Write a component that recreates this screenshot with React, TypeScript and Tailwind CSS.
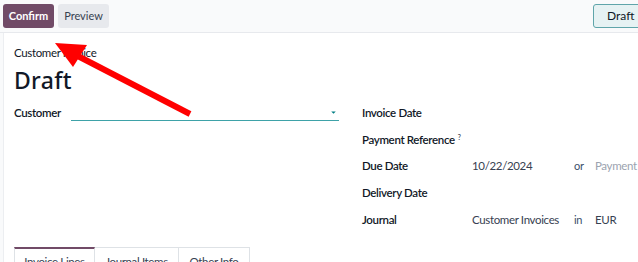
import { ChevronDown } from 'lucide-react';

const rightRows = [
  { label: 'Invoice Date' },
  { label: 'Payment Reference', help: true },
  { label: 'Due Date', value: '10/22/2024', sep: 'or', extra: 'Payment Terms', extraMuted: true },
  { label: 'Delivery Date' },
  { label: 'Journal', value: 'Customer Invoices', sep: 'in', extra: 'EUR' },
];

export default function App() {
  return (
    <div className="relative w-[638px] h-[262px] overflow-hidden bg-[#f9fafb] text-[#111827] font-['Lato',sans-serif]">
      {/* Control panel */}
      <div className="h-[33px] flex items-center justify-between pl-[3px] border-b border-[#e7e9ed]">
        <div className="flex items-center gap-[4px]">
          <button className="h-[24px] w-[51px] rounded-[3px] bg-[#714b67] text-white text-[11px] font-bold">Confirm</button>
          <button className="h-[24px] w-[51px] rounded-[3px] bg-[#e7e9ed] text-[#374151] text-[11px]">Preview</button>
        </div>
        <div className="h-[24px] w-[50px] pl-[13px] -mr-[5px] flex items-center rounded-l-[3px] border border-[#5fa5aa] bg-[#e6f2f3] text-[12px] text-[#111827]">
          Draft
        </div>
      </div>

      {/* Sheet */}
      <div className="ml-[3px] h-[229px] bg-white border-l border-[#eceef1] pl-[10px] pt-[12px] tracking-[-0.35px]">
        <div className="text-[11.5px] leading-[16px]">Customer Invoice</div>
        <div className="text-[23px] leading-[36px] font-medium mt-[1px] tracking-[0.3px] font-['Noto_Sans',sans-serif]">Draft</div>

        <div className="flex mt-[7px]">
          <div className="w-[325px] flex items-start">
            <span className="w-[57px] text-[11.5px] leading-[16px] font-semibold">Customer</span>
            <div className="w-[268px] h-[16px] border-b border-[#3ea2a8] flex justify-end items-center pr-[1px]">
              <ChevronDown size={9} strokeWidth={0} fill="#017e84" className="text-[#017e84]" />
            </div>
          </div>
          <div className="ml-[23px] flex flex-col gap-[10.7px]">
            {rightRows.map((r) => (
              <div key={r.label} className="flex items-center h-[16px] text-[11.5px] leading-[16px] whitespace-nowrap">
                <span className="w-[110px] font-semibold">
                  {r.label}
                  {r.help && <sup className="text-[7px] font-semibold ml-[3px] text-[#374151]">?</sup>}
                </span>
                {r.value && (
                  <>
                    <span className="w-[102px] text-[#374151]">{r.value}</span>
                    <span className="w-[21px] text-[11px] text-[#3b4f6b]">{r.sep}</span>
                    <span className={r.extraMuted ? 'text-[#9ca3af]' : 'text-[#374151]'}>{r.extra}</span>
                  </>
                )}
              </div>
            ))}
          </div>
        </div>

        {/* Tabs */}
        <div className="flex mt-[19px] text-[11.5px] leading-[16px] text-[#374151]">
          <div className="h-[20px] w-[81px] text-center pt-[5px] border border-[#dee2e6] border-t-2 border-t-[#714b67] border-b-0">Invoice Lines</div>
          <div className="h-[20px] w-[84px] text-center pt-[6px] border-t border-r border-[#dee2e6]">Journal Items</div>
          <div className="h-[20px] w-[71px] text-center pt-[6px] border-t border-r border-[#dee2e6]">Other Info</div>
        </div>
      </div>

      {/* Annotation arrow */}
      <svg className="absolute left-0 top-0 pointer-events-none" width="638" height="262">
        <line x1="190" y1="114" x2="72" y2="53" stroke="#ff0000" strokeWidth="6" />
        <polygon points="55,43 87,45 73,67" fill="#ff0000" />
      </svg>
    </div>
  );
}
